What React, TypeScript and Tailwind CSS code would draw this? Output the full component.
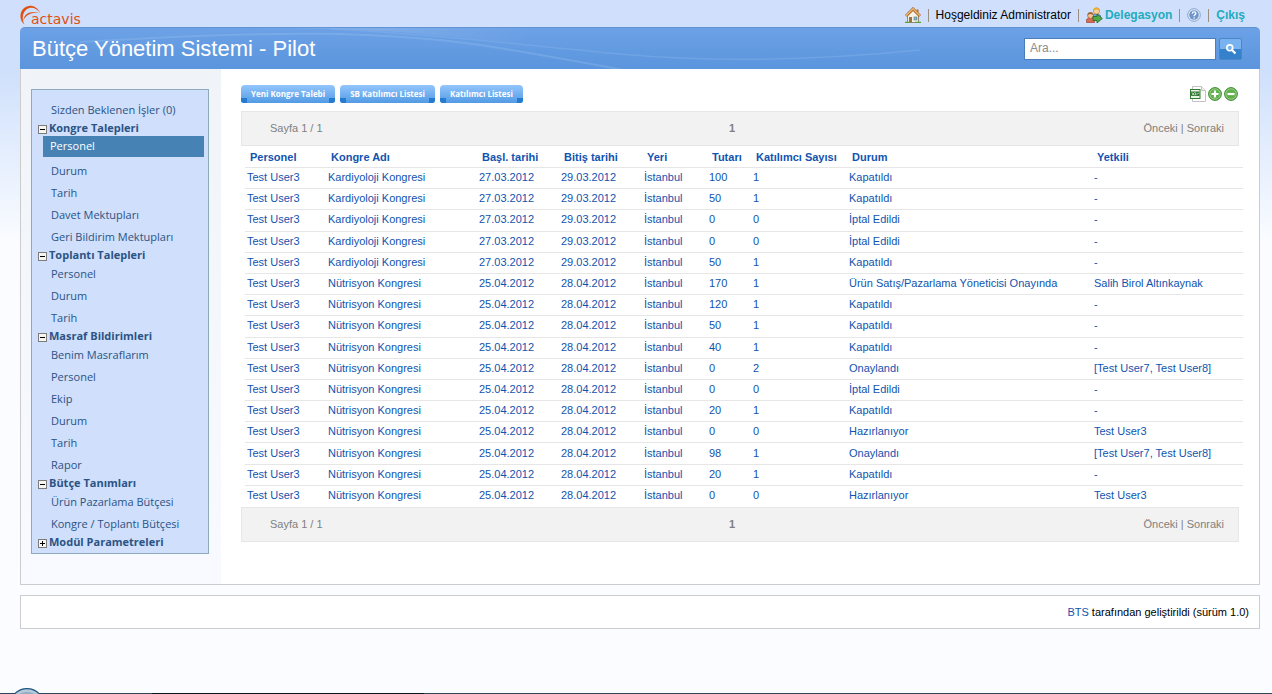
import React from "react";

type Row = string[];

const K = "Kardiyoloji Kongresi";
const N = "Nütrisyon Kongresi";

function row(kongre: string, tutar: string, katilimci: string, durum: string, yetkili = "-"): Row {
  const dates = kongre === K ? ["27.03.2012", "29.03.2012"] : ["25.04.2012", "28.04.2012"];
  return ["Test User3", kongre, dates[0], dates[1], "İstanbul", tutar, katilimci, durum, yetkili];
}

const rows: Row[] = [
  row(K, "100", "1", "Kapatıldı"),
  row(K, "50", "1", "Kapatıldı"),
  row(K, "0", "0", "İptal Edildi"),
  row(K, "0", "0", "İptal Edildi"),
  row(K, "50", "1", "Kapatıldı"),
  row(N, "170", "1", "Ürün Satış/Pazarlama Yöneticisi Onayında", "Salih Birol Altınkaynak"),
  row(N, "120", "1", "Kapatıldı"),
  row(N, "50", "1", "Kapatıldı"),
  row(N, "40", "1", "Kapatıldı"),
  row(N, "0", "2", "Onaylandı", "[Test User7, Test User8]"),
  row(N, "0", "0", "İptal Edildi"),
  row(N, "20", "1", "Kapatıldı"),
  row(N, "0", "0", "Hazırlanıyor", "Test User3"),
  row(N, "98", "1", "Onaylandı", "[Test User7, Test User8]"),
  row(N, "20", "1", "Kapatıldı"),
  row(N, "0", "0", "Hazırlanıyor", "Test User3"),
];

const columns = [
  { name: "Personel", width: "w-[81px]" },
  { name: "Kongre Adı", width: "w-[151px]" },
  { name: "Başl. tarihi", width: "w-[82px]" },
  { name: "Bitiş tarihi", width: "w-[83px]" },
  { name: "Yeri", width: "w-[65px]" },
  { name: "Tutarı", width: "w-[44px]" },
  { name: "Katılımcı Sayısı", width: "w-[96px]" },
  { name: "Durum", width: "w-[245px]" },
  { name: "Yetkili", width: "w-auto" },
];

const groups = [
  { name: "Kongre Talepleri", open: true, items: ["Personel", "Durum", "Tarih", "Davet Mektupları", "Geri Bildirim Mektupları"] },
  { name: "Toplantı Talepleri", open: true, items: ["Personel", "Durum", "Tarih"] },
  { name: "Masraf Bildirimleri", open: true, items: ["Benim Masraflarım", "Personel", "Ekip", "Durum", "Tarih", "Rapor"] },
  { name: "Bütçe Tanımları", open: true, items: ["Ürün Pazarlama Bütçesi", "Kongre / Toplantı Bütçesi"] },
  { name: "Modül Parametreleri", open: false, items: [] },
];

function Logo() {
  return (
    <a href="#" className="relative block h-5 w-16 text-[#e2500e]" aria-label="actavis">
      <svg className="absolute left-0 top-0" width="24" height="20" viewBox="0 0 24 20" fill="none">
        <path d="M4.500 19.500C-.6 15.500-1 7.600 3.800 3.200 9-1.500 17 .3 20.500 8.500 16.500 2.300 10.500 1.100 6.400 4.500 2 8.500 1.800 14.500 4.500 19.500Z" fill="currentColor" />
        <path d="M3.400 15.500C4 9.500 8.500 6 19 7.300 10.500 7.600 5.800 10 3.400 15.500Z" fill="currentColor" />
      </svg>
      <span className="absolute left-[11px] top-1.5 font-['DejaVu_Sans'] text-[14px] leading-4">actavis</span>
    </a>
  );
}

function HouseIcon() {
  return (
    <svg width="16" height="16" viewBox="0 0 16 16">
      <path d="M2.500 8.500V15.500H13.500V8.500L8 3Z" fill="#f6f1e4" stroke="#958b78" />
      <path d="M11.500 2.500H13.500V6L11.500 4.500Z" fill="#b86f3d" />
      <path d="M1 9 8 2 15 9" fill="none" stroke="#a9682f" strokeWidth="3" />
      <path d="M1 8.700 8 1.700 15 8.700" fill="none" stroke="#efb56e" strokeWidth="1.400" />
      <rect x="4" y="10" width="3" height="5.500" fill="#967448" />
      <rect x="9" y="10" width="3" height="3" fill="#79b4d5" stroke="#68807e" strokeWidth=".6" />
      <path d="M0 15.500H5M10 15.500H16" stroke="#5aa13c" strokeWidth="1.300" />
    </svg>
  );
}

function PeopleIcon() {
  return (
    <svg width="17" height="16" viewBox="0 0 17 16">
      <path d="M6.500 12V8.500Q10 5 14.500 8.500V12Z" fill="#6fa4db" stroke="#44729f" strokeWidth=".7" />
      <circle cx="10.500" cy="4" r="3.100" fill="#f8cf9b" stroke="#bd823d" strokeWidth=".7" />
      <path d="M7.300 4Q7 .5 10.500.5T13.700 4Q12 2.500 10.500 2.500T7.300 4Z" fill="#e8ad38" />
      <path d="M.5 15.500V12.500Q4.500 8 8.500 12.500V15.500Z" fill="#dc6951" stroke="#9b4935" strokeWidth=".7" />
      <circle cx="4.500" cy="8.500" r="2.900" fill="#f3c393" stroke="#8a592e" strokeWidth=".7" />
      <path d="M1.600 8Q1.500 5.200 4.500 5.200T7.400 8Q5.500 7 4.500 7T1.600 8Z" fill="#9a6232" />
      <path d="M7 9.500H11V7L16.300 11.500 11 16V13.500H7Z" fill="#55ac46" stroke="#27712c" strokeWidth=".9" />
    </svg>
  );
}

function HelpIcon() {
  return (
    <svg width="14" height="14" viewBox="0 0 14 14">
      <circle cx="7" cy="7" r="6.300" fill="#e8effa" stroke="#83a3c9" />
      <circle cx="7" cy="7" r="4.800" fill="#6e95cc" />
      <path d="M5.200 5.600Q5.400 3.900 7 3.900T8.800 5.400Q8.800 6.300 7.700 6.900 7.100 7.200 7.100 8.200" fill="none" stroke="#fff" strokeWidth="1.300" />
      <circle cx="7.100" cy="10" r=".8" fill="#fff" />
    </svg>
  );
}

function ExcelIcon() {
  return (
    <svg width="16" height="16" viewBox="0 0 16 16">
      <path d="M2.500.5H11.500L15.500 4.500V15.500H2.500Z" fill="#fdfdfd" stroke="#c3c3c3" />
      <path d="M11.500.5V4.500H15.500" fill="#eee" stroke="#c3c3c3" />
      <rect x=".5" y="3.500" width="9.500" height="9" fill="#eaf4e5" stroke="#357a32" />
      <rect x="1" y="5.500" width="8.500" height="4.500" fill="#34763a" />
      <path d="M2 6.500 4.500 9.300M4.500 6.500 2 9.300M5.700 6.500V9.200M7 8.500 8.800 6.700" stroke="#d8efd0" strokeWidth=".9" />
    </svg>
  );
}

function RoundIcon({ plus }: { plus: boolean }) {
  return (
    <svg width="14" height="14" viewBox="0 0 14 14">
      <circle cx="7" cy="7" r="6.400" fill="#60ad4a" stroke="#428c38" />
      <circle cx="7" cy="7" r="5.200" fill="none" stroke="#a4d792" strokeWidth=".8" />
      <path d={plus ? "M3.500 7H10.500M7 3.500V10.500" : "M3.500 7H10.500"} stroke="#fff" strokeWidth="2.200" />
    </svg>
  );
}

function Separator() {
  return <span className="h-[13px] w-px bg-[#9b8f83]" />;
}

function Toggle({ open, name }: { open: boolean; name: string }) {
  return (
    <button type="button" aria-label={name} aria-expanded={open} className="mt-0.5 size-[9px] shrink-0">
      <svg width="9" height="9" viewBox="0 0 9 9" shapeRendering="crispEdges">
        <rect x=".5" y=".5" width="8" height="8" fill="#f6f5f0" stroke="#7c7c7c" />
        <path d={open ? "M2 4.500H7" : "M2 4.500H7M4.500 2V7"} stroke="#000" />
      </svg>
    </button>
  );
}

function Sidebar() {
  return (
    <nav className="border border-[#8caabb] bg-[#cfdffc] pt-[9px] pb-[3px] font-['Open_Sans',sans-serif] text-[11px] text-[#2b5384]">
      <a href="#" className="flex h-[22px] items-center pl-[19px]">Sizden Beklenen İşler (0)</a>
      {groups.map((group, groupIndex) => (
        <section key={group.name}>
          <div className="flex h-[15px] items-center gap-0.5 pl-1.5">
            <Toggle open={group.open} name={group.name} />
            <h2 className="font-bold">{group.name}</h2>
          </div>
          <ul>
            {group.items.map((item, i) =>
              groupIndex === 0 && i === 0 ? (
                <li key={item} className="h-6">
                  <a href="#" aria-current="page" className="mr-1 ml-[11px] flex h-[21px] items-center bg-[#4682b4] pl-[7px] text-white">{item}</a>
                </li>
              ) : (
                <li key={item}>
                  <a href="#" className="flex h-[22px] items-center pl-[19px]">{item}</a>
                </li>
              ),
            )}
          </ul>
        </section>
      ))}
    </nav>
  );
}

function RibbonButton({ children }: { children: React.ReactNode }) {
  return (
    <button type="button" className="relative h-[18px] overflow-hidden rounded-t-[4px] rounded-b-[3px] bg-linear-to-b from-[#93c6fc] to-[#519ae4] px-[10px] font-['Open_Sans',sans-serif] text-[8px] leading-[18px] font-bold whitespace-nowrap text-white">
      <span className="absolute bottom-0 left-0 h-[5px] w-1.5 bg-[#247bd0]" />
      <span className="absolute right-0 bottom-0 h-[5px] w-1.5 bg-[#247bd0]" />
      {children}
    </button>
  );
}

function Pager() {
  return (
    <div className="mr-5 ml-5 grid h-[35px] grid-cols-3 items-center border border-[#e6e6e6] bg-[#f2f2f2] pr-3.5 pl-7 text-[11px] text-[#808080]">
      <span>Sayfa 1 / 1</span>
      <span className="pr-[30px] text-center font-bold">1</span>
      <span className="text-right">
        <a href="#">Önceki</a> | <a href="#">Sonraki</a>
      </span>
    </div>
  );
}

function RequestTable() {
  return (
    <div className="pr-4 pl-6">
      <table className="h-[361px] w-full table-fixed border-separate border-spacing-0 text-left text-[11px] leading-4 whitespace-nowrap text-[#1153ae]">
        <thead>
          <tr className="h-[22px]">
            {columns.map((c) => (
              <th key={c.name} scope="col" className={`${c.width} border-b border-[#e6e6e6] p-0 pl-[5px] font-bold`}>
                <a href="#">{c.name}</a>
              </th>
            ))}
          </tr>
        </thead>
        <tbody>
          {rows.map((cells, r) => (
            <tr key={r} className="group h-[21px]">
              {cells.map((cell, c) => (
                <td key={c} className="border-b border-[#e6e6e6] p-0 pb-0.5 pl-0.5 group-last:border-b-0">
                  <a href="#">{cell}</a>
                </td>
              ))}
            </tr>
          ))}
        </tbody>
      </table>
    </div>
  );
}

export default function App() {
  return (
    <div className="flex min-h-screen flex-col bg-[#fafcff] bg-[linear-gradient(#cfdffc_0,#cfe0fc_70px,#fafcff_240px)] font-['Liberation_Sans',Arial,sans-serif] text-black">
      <div className="mr-3 ml-5 flex h-[27px] items-start justify-between pt-[5px]">
        <Logo />
        <div className="mr-[15px] flex h-5 items-center gap-[7px] text-[12px]">
          <a href="#" aria-label="Ana sayfa"><HouseIcon /></a>
          <Separator />
          <span>Hoşgeldiniz Administrator</span>
          <Separator />
          <a href="#" className="flex items-center gap-0.5 font-bold text-[#22abc0]">
            <PeopleIcon />
            Delegasyon
          </a>
          <Separator />
          <a href="#" aria-label="Yardım"><HelpIcon /></a>
          <Separator />
          <a href="#" className="font-bold text-[#22abc0]">Çıkış</a>
        </div>
      </div>

      <header className="relative mr-3 ml-5 flex h-[42px] items-center justify-between overflow-hidden rounded-t-[5px] border-t border-[#6094d4] bg-linear-to-b from-[#6ca1e6] to-[#5b95dd] pr-[18px] pl-3">
        <svg className="absolute inset-0" width="1240" height="42" viewBox="0 0 1240 42" fill="none">
          <defs>
            <linearGradient id="sweep" gradientUnits="userSpaceOnUse" x1="60" y1="0" x2="510" y2="0">
              <stop offset="0" stopColor="#fff" stopOpacity="0" />
              <stop offset=".65" stopColor="#fff" stopOpacity=".13" />
              <stop offset="1" stopColor="#fff" stopOpacity="0" />
            </linearGradient>
          </defs>
          <path d="M60 12C200 2 300 0 310 0H520V18C450 10 390 3 310 1 240 1 130 6 60 12Z" fill="url(#sweep)" />
          <path d="M60 14C260 2 360 3 460 17 520 26 570 36 610 43" stroke="#9cc4f2" strokeOpacity=".3" strokeWidth="2" />
          <path d="M310 1C430 7 500 17 600 26 700 35 800 32 900 22" stroke="#9cc4f2" strokeOpacity=".25" strokeWidth="1.500" />
        </svg>
        <h1 className="relative text-[22px] leading-7 text-white">Bütçe Yönetim Sistemi - Pilot</h1>
        <form className="relative flex items-center gap-[3px]" onSubmit={(e) => e.preventDefault()}>
          <input
            type="text"
            aria-label="Ara"
            placeholder="Ara..."
            className="h-[22px] w-48 border border-[#4a7ebb] bg-white pb-0.5 pl-[5px] text-[12px] placeholder:text-[#8c8c8c]"
          />
          <button type="submit" aria-label="Ara" className="flex h-[22px] w-[23px] items-center justify-center rounded-[2px] border border-[#4b87c8] bg-linear-to-b from-[#79b3ef] from-50% to-[#3681cb] to-50%">
            <svg width="12" height="12" viewBox="0 0 12 12" fill="none" stroke="#fff">
              <circle cx="4.800" cy="4.800" r="2.900" strokeWidth="1.700" />
              <path d="M7 7 10.500 10.500" strokeWidth="2.200" />
            </svg>
          </button>
        </form>
      </header>

      <div className="mr-3 ml-5 flex border border-t-0 border-[#cccccc] bg-white">
        <aside className="w-[200px] shrink-0 bg-linear-to-b from-[#f0f4f9] to-[#f8faff] pt-5 pr-3 pb-[30px] pl-2.5">
          <Sidebar />
        </aside>
        <main className="min-w-0 grow pt-4">
          <div className="mr-[21px] mb-2 ml-5 flex h-[18px] items-center justify-between">
            <div className="flex gap-[5px]">
              <RibbonButton>Yeni Kongre Talebi</RibbonButton>
              <RibbonButton>SB Katılımcı Listesi</RibbonButton>
              <RibbonButton>Katılımcı Listesi</RibbonButton>
            </div>
            <div className="flex items-center gap-0.5">
              <button type="button" aria-label="Excel"><ExcelIcon /></button>
              <button type="button" aria-label="Ekle"><RoundIcon plus /></button>
              <button type="button" aria-label="Çıkar"><RoundIcon plus={false} /></button>
            </div>
          </div>
          <Pager />
          <RequestTable />
          <Pager />
        </main>
      </div>

      <footer className="mt-2.5 mr-3 ml-5 flex h-[34px] items-center justify-end border border-[#cccccc] bg-white pr-2.5 text-[11px]">
        <p>
          <a href="#" className="text-[#1153ae]">BTS</a> tarafından geliştirildi (sürüm 1.0)
        </p>
      </footer>

      <div className="relative mt-auto h-px bg-[#2c4656]">
        <div className="ml-[152px] h-px w-[272px] bg-[#0b1418]" />
        <svg className="absolute bottom-0 left-3" width="30" height="6" viewBox="0 0 30 6">
          <circle cx="15" cy="18" r="17.300" fill="#b6c9d8" stroke="#1f5681" strokeWidth="1.200" />
          <circle cx="15" cy="20" r="16" fill="#93abc1" />
        </svg>
      </div>
    </div>
  );
}
